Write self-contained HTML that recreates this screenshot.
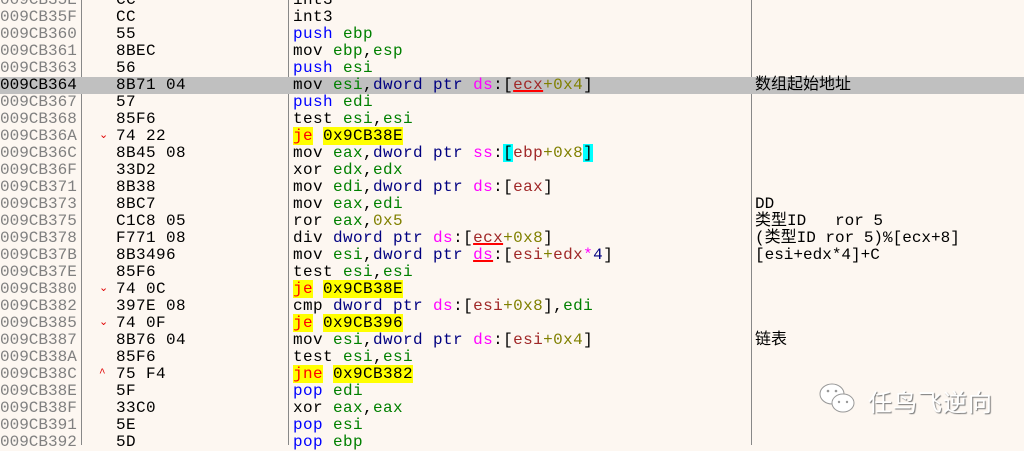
<!DOCTYPE html><html><head><meta charset="utf-8"><style>
body{margin:0;width:1024px;height:445px;overflow:hidden;background:#fdf7f1;font-family:"Liberation Mono","Noto Sans CJK SC",monospace;font-size:16px;position:relative}
.r{position:absolute;left:0;width:1024px;height:17px;line-height:17px;white-space:pre}
.h{background:#c0c0c0}
.a{position:absolute;left:0;color:#808080;letter-spacing:0}
.b{position:absolute;left:116px;color:#000;letter-spacing:.4px}
.d{position:absolute;left:293px;color:#000;letter-spacing:.4px}
.c{position:absolute;left:755px;color:#000;letter-spacing:0}
.ar{position:absolute;left:99px;color:#e00000;font-size:11px}
.v{position:absolute;top:0;width:1px;height:445px;background:#888}
.p{color:#0000ff}.g{color:#008000}.n{color:#000080}.m{color:#ff00ff}.o{color:#808000}.br{color:#a02828}
.u{text-decoration:underline;text-decoration-color:#f00;text-decoration-thickness:2px}
.y{background:#ffff00}.j{color:#f00}.cy{background:#00ffff}
.wm{position:absolute;left:868px;top:383px;font-family:"Noto Sans CJK SC",sans-serif;font-size:24px;color:#fff;text-shadow:1px 1px 1px #777;letter-spacing:1px}
</style></head><body>
<div class="v" style="left:81px"></div><div class="v" style="left:288px"></div><div class="v" style="left:751px"></div>
<div class="r" style="top:-8px"><span class="a">009CB35E</span><span class="b">CC</span><span class="d">int3</span></div>
<div class="r" style="top:9px"><span class="a">009CB35F</span><span class="b">CC</span><span class="d">int3</span></div>
<div class="r" style="top:26px"><span class="a">009CB360</span><span class="b">55</span><span class="d"><span class="p">push</span> <span class="g">ebp</span></span></div>
<div class="r" style="top:43px"><span class="a">009CB361</span><span class="b">8BEC</span><span class="d">mov <span class="g">ebp</span>,<span class="g">esp</span></span></div>
<div class="r" style="top:60px"><span class="a">009CB363</span><span class="b">56</span><span class="d"><span class="p">push</span> <span class="g">esi</span></span></div>
<div class="r h" style="top:77px"><span class="a" style="color:#000">009CB364</span><span class="b">8B71 04</span><span class="d">mov <span class="g">esi</span>,<span class="n">dword ptr</span> <span class="m">ds</span>:[<span class="br u">ecx</span><span class="o">+0x4</span>]</span><span class="c">数组起始地址</span></div>
<div class="r" style="top:94px"><span class="a">009CB367</span><span class="b">57</span><span class="d"><span class="p">push</span> <span class="g">edi</span></span></div>
<div class="r" style="top:111px"><span class="a">009CB368</span><span class="b">85F6</span><span class="d">test <span class="g">esi</span>,<span class="g">esi</span></span></div>
<div class="r" style="top:128px"><span class="a">009CB36A</span><span class="ar">⌄</span><span class="b">74 22</span><span class="d"><span class="j y">je</span> <span class="y">0x9CB38E</span></span></div>
<div class="r" style="top:145px"><span class="a">009CB36C</span><span class="b">8B45 08</span><span class="d">mov <span class="g">eax</span>,<span class="n">dword ptr</span> <span class="m">ss</span>:<span class="cy">[</span><span class="br">ebp</span><span class="o">+0x8</span><span class="cy">]</span></span></div>
<div class="r" style="top:162px"><span class="a">009CB36F</span><span class="b">33D2</span><span class="d">xor <span class="g">edx</span>,<span class="g">edx</span></span></div>
<div class="r" style="top:179px"><span class="a">009CB371</span><span class="b">8B38</span><span class="d">mov <span class="g">edi</span>,<span class="n">dword ptr</span> <span class="m">ds</span>:[<span class="br">eax</span>]</span></div>
<div class="r" style="top:196px"><span class="a">009CB373</span><span class="b">8BC7</span><span class="d">mov <span class="g">eax</span>,<span class="g">edi</span></span><span class="c">DD</span></div>
<div class="r" style="top:213px"><span class="a">009CB375</span><span class="b">C1C8 05</span><span class="d">ror <span class="g">eax</span>,<span class="o">0x5</span></span><span class="c">类型ID   ror 5</span></div>
<div class="r" style="top:230px"><span class="a">009CB378</span><span class="b">F771 08</span><span class="d">div <span class="n">dword ptr</span> <span class="m">ds</span>:[<span class="br u">ecx</span><span class="o">+0x8</span>]</span><span class="c">(类型ID ror 5)%[ecx+8]</span></div>
<div class="r" style="top:247px"><span class="a">009CB37B</span><span class="b">8B3496</span><span class="d">mov <span class="g">esi</span>,<span class="n">dword ptr</span> <span class="m u">ds</span>:[<span class="br">esi</span><span class="o">+</span><span class="br">edx</span><span class="m">*</span><span class="n">4</span>]</span><span class="c">[esi+edx*4]+C</span></div>
<div class="r" style="top:264px"><span class="a">009CB37E</span><span class="b">85F6</span><span class="d">test <span class="g">esi</span>,<span class="g">esi</span></span></div>
<div class="r" style="top:281px"><span class="a">009CB380</span><span class="ar">⌄</span><span class="b">74 0C</span><span class="d"><span class="j y">je</span> <span class="y">0x9CB38E</span></span></div>
<div class="r" style="top:298px"><span class="a">009CB382</span><span class="b">397E 08</span><span class="d">cmp <span class="n">dword ptr</span> <span class="m">ds</span>:[<span class="br">esi</span><span class="o">+0x8</span>],<span class="g">edi</span></span></div>
<div class="r" style="top:315px"><span class="a">009CB385</span><span class="ar">⌄</span><span class="b">74 0F</span><span class="d"><span class="j y">je</span> <span class="y">0x9CB396</span></span></div>
<div class="r" style="top:332px"><span class="a">009CB387</span><span class="b">8B76 04</span><span class="d">mov <span class="g">esi</span>,<span class="n">dword ptr</span> <span class="m">ds</span>:[<span class="br">esi</span><span class="o">+0x4</span>]</span><span class="c">链表</span></div>
<div class="r" style="top:349px"><span class="a">009CB38A</span><span class="b">85F6</span><span class="d">test <span class="g">esi</span>,<span class="g">esi</span></span></div>
<div class="r" style="top:366px"><span class="a">009CB38C</span><span class="ar">^</span><span class="b">75 F4</span><span class="d"><span class="j y">jne</span> <span class="y">0x9CB382</span></span></div>
<div class="r" style="top:383px"><span class="a">009CB38E</span><span class="b">5F</span><span class="d"><span class="p">pop</span> <span class="g">edi</span></span></div>
<div class="r" style="top:400px"><span class="a">009CB38F</span><span class="b">33C0</span><span class="d">xor <span class="g">eax</span>,<span class="g">eax</span></span></div>
<div class="r" style="top:417px"><span class="a">009CB391</span><span class="b">5E</span><span class="d"><span class="p">pop</span> <span class="g">esi</span></span></div>
<div class="r" style="top:434px"><span class="a">009CB392</span><span class="b">5D</span><span class="d"><span class="p">pop</span> <span class="g">ebp</span></span></div>
<svg style="position:absolute;left:818px;top:381px" width="40" height="36" viewBox="0 0 40 36"><ellipse cx="14" cy="13" rx="12" ry="10" fill="#fff" stroke="#999"/><ellipse cx="25" cy="22" rx="11" ry="9" fill="#fff" stroke="#999"/><circle cx="10" cy="10" r="1.3" fill="#999"/><circle cx="18" cy="10" r="1.3" fill="#999"/><circle cx="21" cy="21" r="1.2" fill="#999"/><circle cx="29" cy="21" r="1.2" fill="#999"/></svg>
<div class="wm">任鸟飞逆向</div>
</body></html>
